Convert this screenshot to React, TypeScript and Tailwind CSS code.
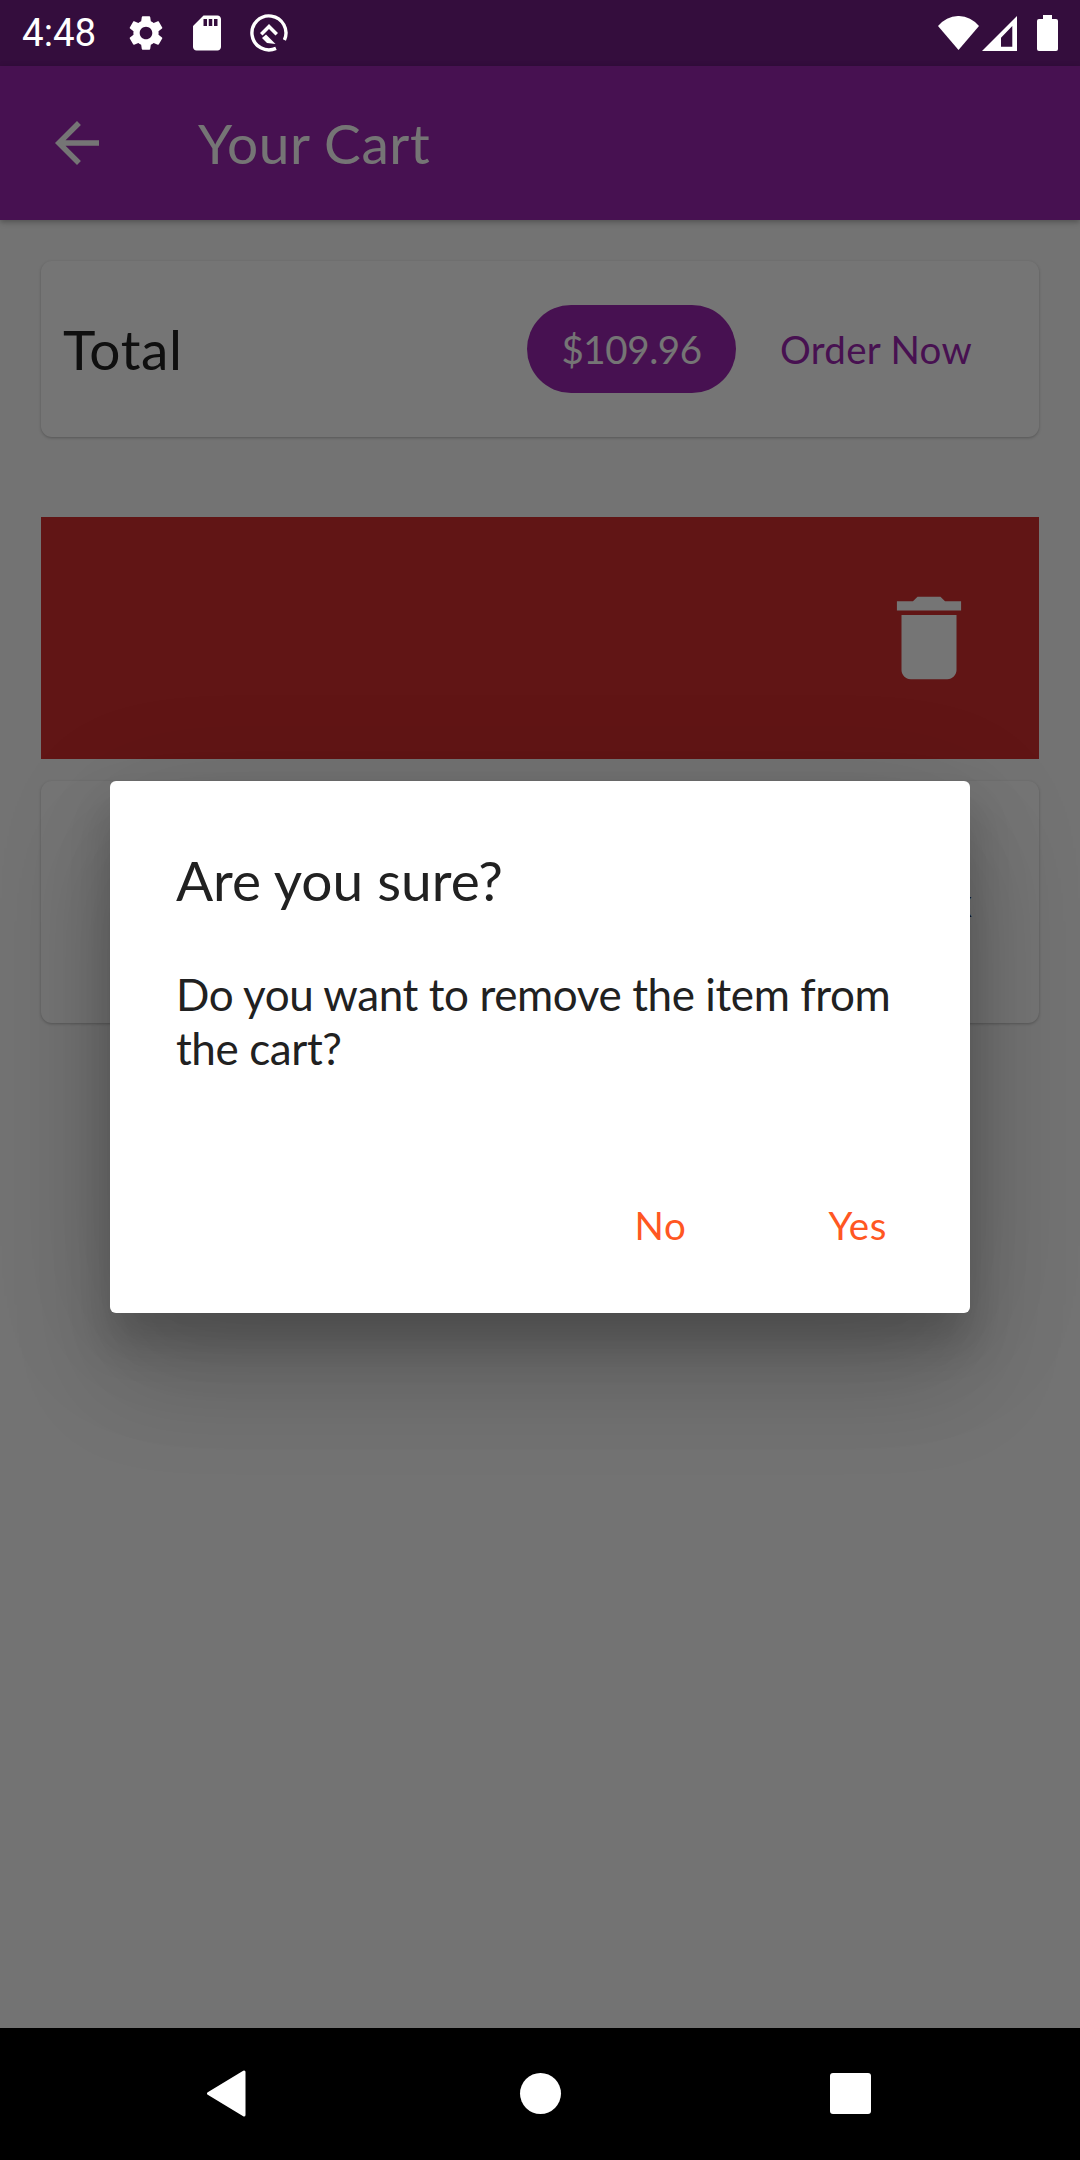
const lato = { fontFamily: '"Lato", "Noto Sans", sans-serif' };

function Gear() {
  return (
    <svg width="42" height="42" viewBox="0 0 24 24" fill="#fff">
      <path d="M19.14 12.94c.04-.3.06-.61.06-.94 0-.32-.02-.64-.07-.94l2.03-1.58c.18-.14.23-.41.12-.61l-1.92-3.32c-.12-.22-.37-.29-.59-.22l-2.39.96c-.5-.38-1.03-.7-1.62-.94l-.36-2.54c-.04-.24-.24-.41-.48-.41h-3.84c-.24 0-.43.17-.47.41l-.36 2.54c-.59.24-1.13.57-1.62.94l-2.39-.96c-.22-.08-.47 0-.59.22L2.74 8.87c-.12.21-.08.47.12.61l2.03 1.58c-.05.3-.09.63-.09.94s.02.64.07.94l-2.03 1.58c-.18.14-.23.41-.12.61l1.92 3.32c.12.22.37.29.59.22l2.39-.96c.5.38 1.03.7 1.62.94l.36 2.54c.05.24.24.41.48.41h3.84c.24 0 .44-.17.47-.41l.36-2.54c.59-.24 1.13-.56 1.62-.94l2.39.96c.22.08.47 0 .59-.22l1.92-3.32c.12-.22.07-.47-.12-.61l-2.01-1.58zM12 15.6c-1.98 0-3.6-1.62-3.6-3.6s1.62-3.6 3.6-3.6 3.6 1.62 3.6 3.6-1.62 3.6-3.6 3.6z" />
    </svg>
  );
}

function SdCard() {
  return (
    <svg width="42" height="42" viewBox="0 0 24 24" fill="#fff">
      <path d="M18 2h-8L4.02 8 4 20c0 1.1.9 2 2 2h12c1.1 0 2-.9 2-2V4c0-1.1-.9-2-2-2zm-6 6h-2V4h2v4zm3 0h-2V4h2v4zm3 0h-2V4h2v4z" />
    </svg>
  );
}

function QLogo() {
  return (
    <svg width="38" height="38" viewBox="0 0 38 38" fill="none">
      <path d="M26 34.4 A17 17 0 1 1 34.4 26" stroke="#fff" strokeWidth="3.4" />
      <path d="M19 10 L28 19 L25.5 21.5 L19 15 L12.5 21.5 L10 19 Z" fill="#fff" />
      <path d="M12 24 L16 20.5 L25.5 30 L17 29 Z" fill="#fff" />
    </svg>
  );
}

function Wifi() {
  return (
    <svg width="41" height="34" viewBox="0 0 41 34" fill="#fff">
      <path d="M0 10 A26 26 0 0 1 41 10 L20.5 34 Z" />
    </svg>
  );
}

function Signal() {
  return (
    <svg width="35" height="35" viewBox="0 0 35 35" fill="#fff">
      <path fillRule="evenodd" d="M35 0 V35 H0 Z M30.3 10 V30.7 H19 V21.7 Z" />
    </svg>
  );
}

function Battery() {
  return (
    <div className="flex flex-col items-center">
      <div className="h-[4px] w-[9px] bg-white" />
      <div className="h-[32px] w-[21px] rounded-[2px] bg-white" />
    </div>
  );
}

function ArrowBack() {
  return (
    <svg width="66" height="66" viewBox="0 0 24 24" fill="#fff">
      <path d="M20 11H7.83l5.59-5.59L12 4l-8 8 8 8 1.41-1.41L7.83 13H20v-2z" />
    </svg>
  );
}

function Trash() {
  return (
    <svg width="110" height="110" viewBox="0 0 24 24" fill="#fff">
      <path d="M6 19c0 1.1.9 2 2 2h8c1.1 0 2-.9 2-2V7H6v12zM19 4h-3.5l-1-1h-5l-1 1H5v2h14V4z" />
    </svg>
  );
}

export default function App() {
  return (
    <div className="flex h-[2160px] w-[1080px] flex-col overflow-hidden bg-black" style={lato}>
      <div className="flex h-[66px] shrink-0 items-center justify-between bg-[#340d3d] pl-[22px] pr-[22px] text-white">
        <div className="flex items-center">
          <span className="text-[38.5px] leading-none" style={{ fontFamily: 'Roboto, sans-serif' }}>4:48</span>
          <div className="ml-[29px] flex items-center gap-[19px]">
            <Gear />
            <SdCard />
            <div className="ml-[3px]"><QLogo /></div>
          </div>
        </div>
        <div className="flex items-center">
          <Wifi />
          <div className="ml-[3px]"><Signal /></div>
          <div className="ml-[20px]"><Battery /></div>
        </div>
      </div>

      <div className="relative flex min-h-0 flex-1 flex-col bg-[#fafafa]">
        <div className="flex h-[154px] shrink-0 items-center bg-[#9c27b0] pl-[44px] text-white shadow-[0_2px_6px_rgba(0,0,0,0.3)]">
          <ArrowBack />
          <span className="ml-[88px] text-[55px] leading-none tracking-[0.6px]">Your Cart</span>
        </div>

        <div className="flex flex-col px-[41px] pt-[41px]">
          <div className="flex h-[176px] items-center rounded-[11px] bg-white pl-[22px] pr-[67px] shadow-[0_1px_3px_rgba(0,0,0,0.25)]">
            <span className="text-[55px] leading-none tracking-[0.6px] text-[#212121]">Total</span>
            <div className="ml-auto flex h-[88px] w-[209px] items-center justify-center rounded-full bg-[#9c27b0] text-[38.5px] leading-none tracking-[-0.4px] text-white">
              $109.96
            </div>
            <span className="ml-[44px] text-[38.5px] leading-none tracking-[0.3px] text-[#9c27b0]">Order Now</span>
          </div>

          <div className="mt-[80px] flex h-[242px] items-center justify-end bg-[#d32f2f] pr-[55px]">
            <Trash />
          </div>

          <div className="mt-[22px] flex h-[242px] items-center justify-end rounded-[11px] bg-white pr-[67px] shadow-[0_1px_3px_rgba(0,0,0,0.25)]">
            <span className="text-[38.5px] leading-none text-[#212121]">1 x</span>
          </div>
        </div>

        <div className="absolute inset-0 flex items-center justify-center bg-black/54">
          <div className="w-[860px] rounded-[6px] bg-white px-[66px] pb-[65px] pt-[66px] shadow-[0_66px_105px_rgba(0,0,0,0.14),0_25px_126px_rgba(0,0,0,0.12),0_30px_41px_rgba(0,0,0,0.16)]">
            <h2 className="text-[55px] leading-[66px] text-[#212121]">Are you sure?</h2>
            <p className="mt-[54px] text-[44px] leading-[54px] tracking-[-0.4px] text-[#212121]">
              Do you want to remove the item from the cart?
            </p>
            <div className="mt-[127px] flex justify-end pr-[17px] text-[38.5px] leading-[46px] tracking-[0.6px] text-[#ff5722]">
              <span>No</span>
              <span className="ml-[142px]">Yes</span>
            </div>
          </div>
        </div>
      </div>

      <div className="flex h-[132px] shrink-0 items-center bg-black pb-[1px]">
        <svg className="ml-[206px]" width="40" height="47" viewBox="0 0 40 47" fill="#fff" stroke="#fff" strokeWidth="3" strokeLinejoin="round">
          <path d="M2.5 23.5 L38 2 V45 Z" />
        </svg>
        <div className="ml-[274px] h-[41px] w-[41px] rounded-full bg-white" />
        <div className="ml-[269px] h-[41px] w-[41px] rounded-[3px] bg-white" />
      </div>
    </div>
  );
}
